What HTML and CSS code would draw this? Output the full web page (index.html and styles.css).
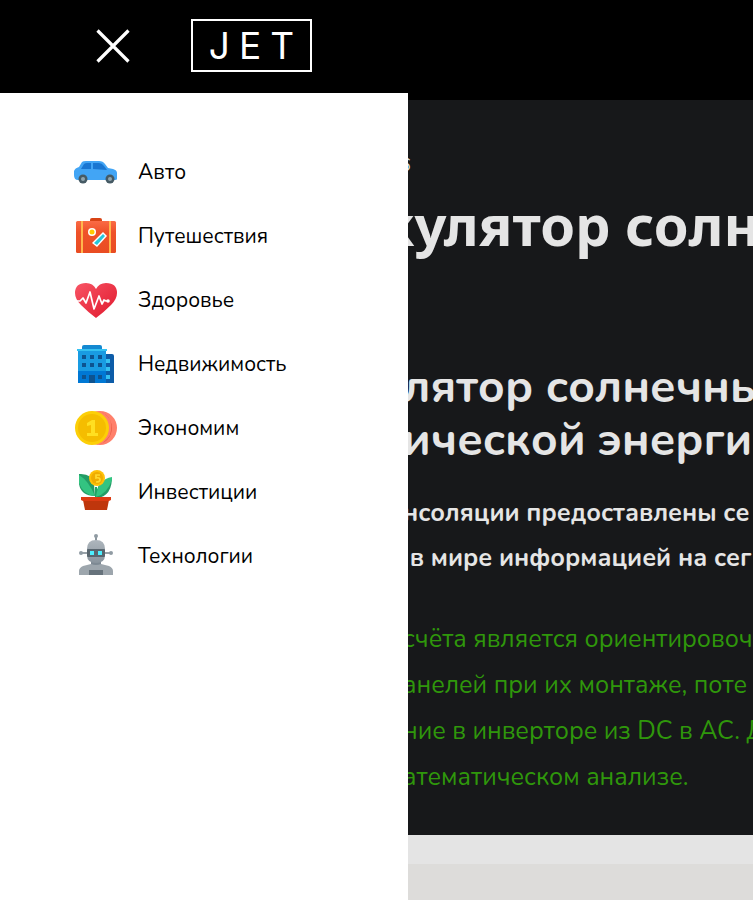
FILE: index.html
```html
<!DOCTYPE html>
<html lang="ru">
<head>
<meta charset="utf-8">
<meta name="viewport" content="width=device-width, initial-scale=1">
<title>JET</title>
<link rel="stylesheet" href="styles.css">
</head>
<body>
<header class="topbar">
  <button class="close" type="button" aria-label="Закрыть меню">
    <svg width="34" height="34" viewBox="0 0 34 34"><path d="M1.500 1.500 32.500 32.500M32.500 1.500 1.500 32.500" stroke="#fff" stroke-width="3.200"/></svg>
  </button>
  <a class="logo" href="#"><span>J</span><span>E</span><span>T</span></a>
</header>
<div class="page">
  <nav class="drawer">
    <ul class="menu">
      <li><a href="#">
        <svg viewBox="0 0 44 44"><path d="M0 25v-4q1-3 5-4l3-5q1-1 4-1h13q4 0 6 3l3 4 5 1q4 1 4 4v6q0 1-2 1H4q-4 0-4-5z" fill="#42a5f5"/><path d="M7 19l3-5q1-1 3-1h4v6zM19 13h6q3 0 5 3l3 4-14-1z" fill="#1976d2"/><circle cx="9" cy="29" r="4.500" fill="#455a64"/><circle cx="36" cy="29" r="4.500" fill="#455a64"/><circle cx="9" cy="29" r="2" fill="#90a4ae"/><circle cx="36" cy="29" r="2" fill="#90a4ae"/></svg>
        <span>Авто</span></a></li>
      <li><a href="#">
        <svg viewBox="0 0 44 44"><defs><linearGradient id="case" x2="0" y2="1"><stop stop-color="#fa6b45"/><stop offset=".35" stop-color="#ef5229"/><stop offset="1" stop-color="#e94c22"/></linearGradient></defs><path d="M16 8V6q0-2 2-2h8q2 0 2 2v2z" fill="#d84315"/><rect x="2" y="7" width="40" height="32" rx="1.500" fill="url(#case)"/><path d="M7 7h2v32H7zM35 7h2v32h-2z" fill="#ffb74d"/><circle cx="18" cy="18" r="4" fill="#fff"/><circle cx="18" cy="18" r="2.500" fill="#ffca00"/><path d="M29 18l4 4-10 11-5-4z" fill="#fff"/><path d="M29 20l2 2-8 9-3-2z" fill="#26c6da"/></svg>
        <span>Путешествия</span></a></li>
      <li><a href="#">
        <svg viewBox="0 0 44 44"><defs><linearGradient id="heart" x2="1" y2="1"><stop stop-color="#f85565"/><stop offset="1" stop-color="#e0182d"/></linearGradient></defs><path d="M22 40Q15 35 7 27 1 21 1 15 1 5 12 5q7 0 10 6 3-6 10-6 11 0 11 10 0 6-6 12-8 8-15 13z" fill="url(#heart)"/><path d="M3 23h3l3-3 3 5 4-11 4 17 5-13 3 8 2-4 2 1h2" fill="none" stroke="#fff" stroke-width="1.700" stroke-linejoin="round"/><circle cx="34" cy="23" r="1.800" fill="#fff"/></svg>
        <span>Здоровье</span></a></li>
      <li><a href="#">
        <svg viewBox="0 0 44 44"><path d="M31 12h7q2 0 2 2v27h-9z" fill="#0d5ca8"/><path d="M8 7V5q0-2 2-2h16q2 0 2 2v2z" fill="#1489d1"/><path d="M4 7h28v34H4z" fill="#199be2"/><path d="M3 7h30v2H3z" fill="#35c1f1"/><path d="M4 29h28v12H4z" fill="#0078d4"/><path d="M8 13h4v4H8zM16 13h4v4h-4zM24 13h4v4h-4zM8 21h4v4H8zM16 21h4v4h-4zM24 21h4v4h-4zM8 33h4v4H8zM15 33h6v8h-6zM24 33h4v4h-4z" fill="#0d5390"/><path d="M32 17h4v4h-4zM32 25h4v4h-4zM32 33h4v4h-4z" fill="#35c1f1"/></svg>
        <span>Недвижимость</span></a></li>
      <li><a href="#">
        <svg viewBox="0 0 44 44"><circle cx="26" cy="22" r="17" fill="#ff806b"/><path d="M21 5a17 17 0 0 1 0 34q9 0 15-10 3-10-1-17-5-7-14-7z" fill="#e95f48"/><circle cx="18" cy="22" r="17" fill="#fccf08"/><circle cx="18" cy="22" r="14" fill="#f5bd00"/><path d="M13 17l5-3h3v13h3v3H13v-3h4v-8l-4 1z" fill="#ffdf21"/></svg>
        <span>Экономим</span></a></li>
      <li><a href="#">
        <svg viewBox="0 0 44 44"><path d="M22 17v14" stroke="#20a565" stroke-width="2"/><path d="M21 26Q7 26 5 14V4q13-1 15 10z" fill="#239c65"/><path d="M21 26Q15 11 5 5v8q4 12 16 13z" fill="#33c481"/><path d="M22 28Q22 9 38 9V4q1 23-16 24z" fill="#239c65"/><path d="M22 27Q24 9 38 7v3Q33 24 22 27z" fill="#33c481"/><circle cx="23" cy="8" r="8" fill="#ffc107"/><circle cx="23" cy="8" r="6" fill="#efac00"/><path d="M26 5h-4v3q4-1 4 2 0 2-4 2" fill="none" stroke="#ffd92e" stroke-width="1.700"/><path d="M9 30h26l-2 10H11z" fill="#bf360c"/><path d="M7 27h30v3l-2 1H9l-2-1z" fill="#dd3b12"/></svg>
        <span>Инвестиции</span></a></li>
      <li><a href="#">
        <svg viewBox="0 0 44 44"><defs><linearGradient id="metal" x2="0" y2="1"><stop stop-color="#aeb6bd"/><stop offset="1" stop-color="#89949d"/></linearGradient></defs><path d="M22 1v8M6 19h32" stroke="#77838c" stroke-width="1.700"/><circle cx="22" cy="2" r="2" fill="#909ba3"/><circle cx="7" cy="19" r="2" fill="#909ba3"/><circle cx="37" cy="19" r="2" fill="#909ba3"/><path d="M17 26h10v7H17z" fill="#7d8993"/><path d="M13 15q0-9 9-9t9 9v6q0 8-9 8t-9-8z" fill="url(#metal)"/><path d="M5 41v-4q0-3 4-5l8-2q5 2 10 0l8 2q4 2 4 5v4z" fill="#9da6ad"/><path d="M15 36h14v5H15z" fill="#66727b"/><rect x="13" y="15" width="18" height="8" rx="1" fill="#59666f"/><path d="M16 17h4v4h-4zM24 17h4v4h-4z" fill="#4df0ff"/></svg>
        <span>Технологии</span></a></li>
    </ul>
  </nav>
  <main class="content">
    <section class="article">
      <p class="date">6</p>
      <h1>кулятор солн</h1>
      <h2>лятор солнечнь<br>ической энерги</h2>
      <p class="lead">нсоляции предоставлены се<br>&nbsp;в мире информацией на сег</p>
      <p class="note">счёта является ориентировоч<br>анелей при их монтаже, поте<br>ние в инверторе из DC в AC. Д<br>атематическом анализе.</p>
    </section>
    <div class="panel"></div>
  </main>
</div>
</body>
</html>
```
FILE: styles.css
```css
* { box-sizing: border-box; }
body {
  margin: 0;
  min-height: 100vh;
  display: flex;
  flex-direction: column;
  font-family: Nunito, "Open Sans", "Noto Sans", sans-serif;
  color: #e5e5e5;
  background: #fff;
}
.topbar {
  display: flex;
  align-items: center;
  gap: 61px;
  height: 93px;
  padding: 0 96px 2px;
  background: #000;
}
.close {
  display: flex;
  padding: 0;
  border: 0;
  background: none;
}
.logo {
  display: flex;
  align-items: center;
  justify-content: center;
  gap: 9px;
  width: 121px;
  height: 53px;
  border: 2px solid #fff;
  color: #fff;
  font: 400 37px/1 Inter, sans-serif;
  text-decoration: none;
}
.page {
  flex: 1;
  display: grid;
  grid-template-columns: 408px minmax(0, 1fr);
}
.drawer { padding: 57px 74px; }
.menu {
  display: flex;
  flex-direction: column;
  gap: 20px;
  margin: 0;
  padding: 0;
  list-style: none;
}
.menu a {
  display: flex;
  align-items: center;
  gap: 20px;
  color: #000;
  font-size: 21px;
  line-height: 44px;
  text-decoration: none;
}
.menu svg { width: 44px; height: 44px; }
.content {
  display: flex;
  flex-direction: column;
  overflow: hidden;
  border-top: 7px solid #000;
  background: #e4e4e4;
}
.article {
  padding: 52px 0 35px;
  background: #17181a;
  white-space: nowrap;
}
.article > * { margin: 0 0 0 -5px; }
.article .date { margin-left: -8px; font-size: 18px; line-height: 26px; }
.article h1 {
  margin: 8px 0 0 -28px;
  font-family: "Noto Sans", "Open Sans", sans-serif;
  font-size: 56px;
  line-height: 76px;
}
.article h2 { margin-top: 98px; font-size: 46px; line-height: 53px; }
.article .lead { margin-top: 25px; font-size: 25px; line-height: 45px; font-weight: 700; }
.article .note { margin-top: 35px; font-size: 25px; line-height: 46px; color: #2f970b; }
.panel { flex: 1; margin-top: 29px; background: #dddcda; }
```
